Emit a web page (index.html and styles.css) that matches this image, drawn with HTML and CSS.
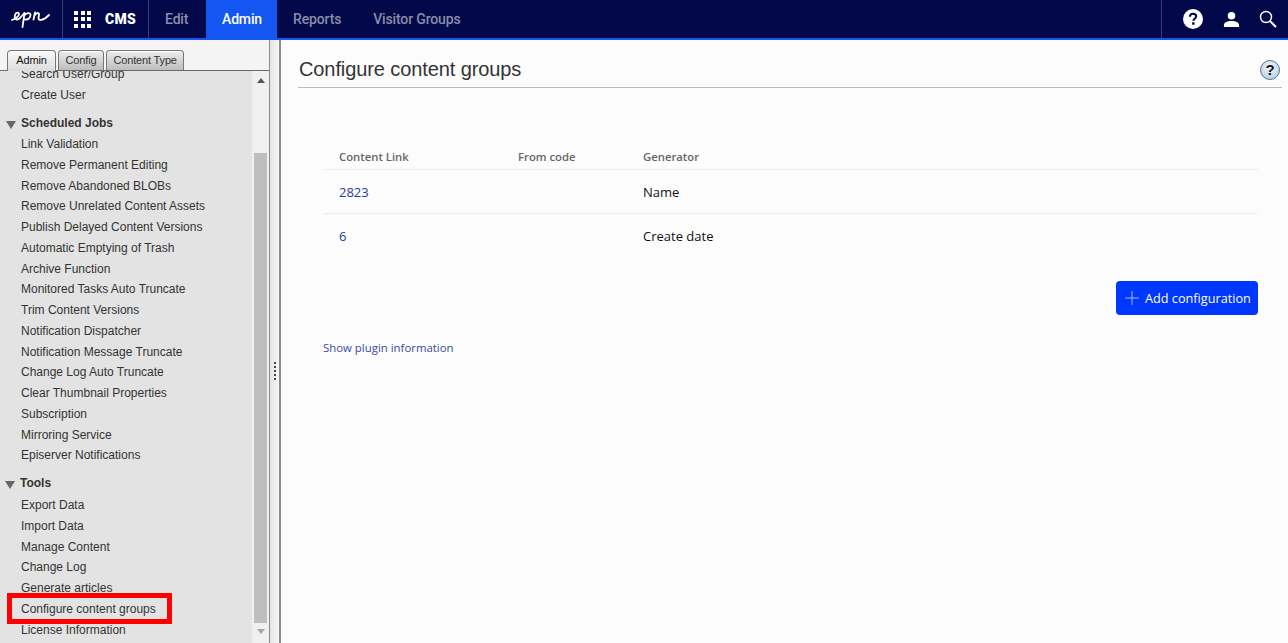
FILE: index.html
```html
<!DOCTYPE html>
<html lang="en">
<head>
    <meta charset="UTF-8">
    <title>Configure content groups</title>
    <link rel="stylesheet" href="styles.css">
</head>
<body>
    <header class="topbar">
        <a class="logo-cell">
            <svg width="40" height="18" viewBox="0 0 40 18" fill="none" stroke="#fff" stroke-width="1.800" stroke-linecap="round" stroke-linejoin="round">
                <path d="M1 10C4 9 8 6.500 8 4.200C8 2 5 2 4 5C3 9 6 11 9 8L13 3.500"/>
                <path d="M13.500 3L11.500 17M13 6C15 3 19.500 1.800 19.500 5C19.500 8 17 10 14 9.500"/>
                <path d="M24 2.500L22.500 9.500M23.500 5.500C25 3 28 1.800 28 4.500L27.500 8C27.500 11 32 11 38 5"/>
            </svg>
        </a>
        <a class="cms-cell">
            <span class="app-grid">
                <i></i><i></i><i></i><i></i><i></i><i></i><i></i><i></i><i></i>
            </span>
            <span class="cms-label">CMS</span>
        </a>
        <nav class="main-nav">
            <a>Edit</a>
            <a class="active">Admin</a>
            <a>Reports</a>
            <a>Visitor Groups</a>
        </nav>
        <div class="top-icons">
            <svg width="20" height="20" viewBox="0 0 22 22">
                <circle cx="11" cy="11" r="11" fill="#fff"/>
                <path d="M7.600 8.500C7.700 6.300 9.200 5.200 11.100 5.200C13.100 5.200 14.500 6.400 14.500 8.100C14.500 9.500 13.700 10.200 12.700 10.900C11.800 11.500 11.400 12 11.400 13" fill="none" stroke="#02084a" stroke-width="2.300"/>
                <rect x="10" y="14.600" width="2.700" height="2.700" fill="#02084a"/>
            </svg>
            <svg width="17" height="17" viewBox="0 0 18 18" fill="#fff">
                <circle cx="9" cy="5" r="4"/>
                <path d="M1 17V14.500C1 12 5 10.500 9 10.500C13 10.500 17 12 17 14.500V17Z"/>
            </svg>
            <svg width="18" height="18" viewBox="0 0 18 18" fill="none" stroke="#fff">
                <circle cx="7" cy="7" r="5.500" stroke-width="1.400"/>
                <path d="M11 11L17 17" stroke-width="2"/>
            </svg>
        </div>
    </header>

    <div class="workspace">
        <aside class="sidebar">
            <div class="tabs">
                <a class="tab selected">Admin</a>
                <a class="tab">Config</a>
                <a class="tab">Content Type</a>
            </div>
            <div class="tree-panel">
                <div class="tree">
                    <ul class="tree-list clipped">
                        <li>Search User/Group</li>
                        <li>Create User</li>
                    </ul>
                    <h4 class="tree-head"><span class="arrow"></span>Scheduled Jobs</h4>
                    <ul class="tree-list">
                        <li>Link Validation</li>
                        <li>Remove Permanent Editing</li>
                        <li>Remove Abandoned BLOBs</li>
                        <li>Remove Unrelated Content Assets</li>
                        <li>Publish Delayed Content Versions</li>
                        <li>Automatic Emptying of Trash</li>
                        <li>Archive Function</li>
                        <li>Monitored Tasks Auto Truncate</li>
                        <li>Trim Content Versions</li>
                        <li>Notification Dispatcher</li>
                        <li>Notification Message Truncate</li>
                        <li>Change Log Auto Truncate</li>
                        <li>Clear Thumbnail Properties</li>
                        <li>Subscription</li>
                        <li>Mirroring Service</li>
                        <li>Episerver Notifications</li>
                    </ul>
                    <h4 class="tree-head tools"><span class="arrow"></span>Tools</h4>
                    <ul class="tree-list">
                        <li>Export Data</li>
                        <li>Import Data</li>
                        <li>Manage Content</li>
                        <li>Change Log</li>
                        <li>Generate articles</li>
                        <li class="marked">Configure content groups</li>
                        <li>License Information</li>
                    </ul>
                </div>
                <div class="scrollbar">
                    <span class="scroll-up"></span>
                    <span class="scroll-thumb"></span>
                    <span class="scroll-down"></span>
                </div>
            </div>
        </aside>

        <div class="splitter">
            <span class="grip"><i></i><i></i><i></i><i></i><i></i></span>
        </div>

        <main class="content">
            <div class="title-row">
                <h1>Configure content groups</h1>
                <span class="help-ball">?</span>
            </div>
            <table class="groups">
                <thead>
                    <tr>
                        <th class="col-link">Content Link</th>
                        <th class="col-code">From code</th>
                        <th>Generator</th>
                    </tr>
                </thead>
                <tbody>
                    <tr>
                        <td><a>2823</a></td>
                        <td></td>
                        <td>Name</td>
                    </tr>
                    <tr>
                        <td><a>6</a></td>
                        <td></td>
                        <td>Create date</td>
                    </tr>
                </tbody>
            </table>
            <div class="actions">
                <button class="add-btn">
                    <svg width="14" height="14" viewBox="0 0 14 14" stroke="#9db8ff" stroke-width="1"><path d="M7 0V14M0 7H14"/></svg>
                    Add configuration
                </button>
            </div>
            <a class="plugin-link">Show plugin information</a>
        </main>
    </div>
</body>
</html>
```

FILE: styles.css
```css
* {
    box-sizing: border-box;
}

html, body {
    height: 100%;
}

body {
    margin: 0;
    display: flex;
    flex-direction: column;
    overflow: hidden;
    font-family: "Liberation Sans", Arial, sans-serif;
    font-size: 12px;
    color: #222;
    background-color: #fcfcfc;
}

/* top bar */
.topbar {
    flex: none;
    display: flex;
    height: 40px;
    background-color: #02084a;
    border-bottom: 2px solid #1456f1;
    color: #fff;
    font-family: Roboto, sans-serif;
}

.logo-cell {
    width: 63px;
    display: flex;
    align-items: center;
    justify-content: center;
    border-right: 1px solid #3a3f70;
}

.cms-cell {
    width: 86px;
    padding-left: 11px;
    display: flex;
    align-items: center;
    gap: 14px;
    border-right: 1px solid #3a3f70;
}

.app-grid {
    display: grid;
    grid-template-columns: repeat(3, 4px);
    gap: 2.500px;
}

.app-grid i {
    height: 4px;
    background-color: #fff;
}

.cms-label {
    font-size: 14px;
    font-weight: 900;
    letter-spacing: 0.3px;
}

.main-nav {
    display: flex;
    font-size: 14px;
    font-weight: 500;
    letter-spacing: -0.15px;
}

.main-nav a {
    display: flex;
    align-items: center;
    padding: 0 16px;
    color: #8a8da8;
}

.main-nav a:first-child {
    width: 57px;
}

.main-nav a.active {
    width: 71px;
    color: #fff;
    background-color: #1456f1;
}

.top-icons {
    margin-left: auto;
    width: 127px;
    padding: 0 11px 0 21px;
    display: flex;
    align-items: center;
    justify-content: space-between;
    border-left: 1px solid #3a3f70;
}

/* left column */
.workspace {
    flex: 1;
    display: flex;
    min-height: 0;
}

.sidebar {
    width: 269px;
    flex: none;
    display: flex;
    flex-direction: column;
    background-color: #f4f4f4;
    padding-top: 10px;
}

.tabs {
    flex: none;
    display: flex;
    gap: 2px;
    height: 21px;
    padding-left: 7px;
    border-bottom: 1px solid #6b6b6b;
}

.tab {
    height: 20px;
    padding: 0 6.500px;
    line-height: 18px;
    font-size: 11px;
    letter-spacing: -0.15px;
    color: #333;
    border: 1px solid #777;
    border-bottom: 0;
    border-radius: 4px 4px 0 0;
    background-image: linear-gradient(#ececec, #bdbdbd);
    box-shadow: inset 0 1px 0 #fff;
}

.tab.selected {
    width: 49px;
    height: 21px;
    padding: 0;
    text-align: center;
    color: #111;
    background-image: linear-gradient(#fafafa, #dcdcdc);
    position: relative;
    z-index: 1;
}

.tree-panel {
    flex: 1;
    display: flex;
    min-height: 0;
    background-color: #e3e3e3;
}

.tree {
    flex: 1;
    overflow: hidden;
    color: #333;
}

.tree-list {
    margin: 0;
    padding: 0 0 0 21px;
    list-style: none;
}

.tree-list.clipped {
    margin-top: -6.800px;
}

.tree-list.clipped li:first-child {
    line-height: 18px;
}

.tree-list li {
    height: 20.750px;
    line-height: 20.750px;
    padding-top: 0.500px;
    white-space: nowrap;
}

.tree-list li.marked {
    position: relative;
}

.tree-list li.marked::after {
    content: "";
    position: absolute;
    left: -14px;
    top: -5px;
    width: 155px;
    height: 21px;
    border: 5px solid #f00;
}

.tree-head {
    margin: 7px 0 0;
    padding-left: 6px;
    height: 21px;
    display: flex;
    align-items: center;
    font-size: 12px;
    font-weight: bold;
    color: #333;
}

.tree-head.tools {
    margin-top: 7px;
    margin-bottom: 1px;
    padding-left: 5px;
}

.arrow {
    width: 0;
    height: 0;
    margin: 3px 5px 0 0;
    border: 5px solid transparent;
    border-top: 8px solid #666;
    border-bottom: 0;
}

.scrollbar {
    flex: none;
    width: 17px;
    margin-left: auto;
    display: flex;
    flex-direction: column;
    align-items: center;
    background-color: #f0f0f0;
    padding: 0 1px;
}

.scroll-up, .scroll-down {
    flex: none;
    width: 0;
    height: 0;
    border: 4px solid transparent;
}

.scroll-up {
    margin-top: 7px;
    border-bottom: 5px solid #555;
    border-top: 0;
}

.scroll-thumb {
    flex: none;
    width: 13px;
    height: 470px;
    margin-top: 70px;
    background-color: #bebebe;
}

.scroll-down {
    margin-top: 6px;
    border-top: 5px solid #a3a3a3;
    border-bottom: 0;
}

.splitter {
    flex: none;
    width: 12px;
    display: flex;
    align-items: center;
    justify-content: center;
    background-image: linear-gradient(to right, #e4e4e4, #f6f6f6);
    border-left: 1px solid #8c8c8c;
    border-right: 2px solid #8c8c8c;
}

.grip {
    display: flex;
    flex-direction: column;
    gap: 2px;
    margin-top: 59px;
}

.grip i {
    width: 2px;
    height: 2px;
    background-color: #444;
}

/* main column */
.content {
    flex: 1;
    min-width: 0;
    padding: 0 6px 0 17px;
    font-family: "Open Sans", sans-serif;
}

.title-row {
    height: 48px;
    padding: 12px 2px 0 1px;
    display: flex;
    align-items: center;
    justify-content: space-between;
    border-bottom: 1px solid #bdbdbd;
}

.title-row h1 {
    margin: 0;
    font-family: "Liberation Sans", Arial, sans-serif;
    font-size: 20px;
    font-weight: normal;
    letter-spacing: -0.1px;
    color: #333;
}

.help-ball {
    width: 20px;
    height: 20px;
    border-radius: 50%;
    border: 1px solid #5d7288;
    background-image: radial-gradient(circle at 50% 35%, #f4f8fc, #a9c6e6);
    color: #111;
    text-align: center;
    font-family: "Liberation Sans", Arial, sans-serif;
    font-size: 15px;
    font-weight: bold;
    line-height: 18px;
}

.groups {
    width: 935px;
    margin: 58px 0 0 25px;
    border-collapse: collapse;
    font-size: 13px;
}

.groups th {
    height: 23px;
    padding: 0 0 2px 16px;
    text-align: left;
    font-size: 11.300px;
    font-weight: 600;
    color: #666;
    border-bottom: 1px solid #eee;
}

.groups td {
    height: 44px;
    padding: 2px 0 0 16px;
    color: #111;
    border-bottom: 1px solid #eee;
}

.groups tbody tr:last-child td {
    border-bottom: 0;
}

.groups a {
    color: #2b3a9e;
}

.col-link {
    width: 179px;
}

.col-code {
    width: 125px;
}

.actions {
    display: flex;
    justify-content: flex-end;
    margin: 24px 24px 0 0;
}

.add-btn {
    height: 34px;
    width: 142px;
    display: flex;
    align-items: center;
    gap: 6px;
    padding: 0 0 0 9px;
    border: 0;
    border-radius: 4px;
    background-color: #0037ff;
    color: #fff;
    font-family: "Open Sans", sans-serif;
    font-size: 12.700px;
}

.plugin-link {
    display: block;
    margin: 25px 0 0 25px;
    font-size: 11.400px;
    color: #3b4a9e;
}
```
